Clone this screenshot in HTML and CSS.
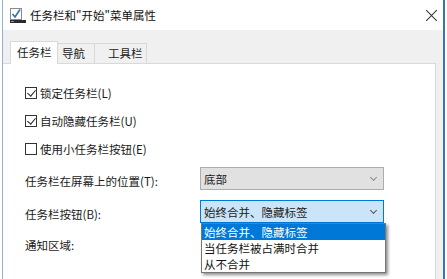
FILE: index.html
```html
<!DOCTYPE html>
<html lang="zh-CN">
<head>
<meta charset="utf-8">
<link rel="stylesheet" href="styles.css">
</head>
<body>
<div class="window">
  <div class="titlebar">
    <svg class="app-icon" width="16" height="16" viewBox="0 0 16 16">
      <rect x="0.5" y="0.5" width="11" height="11" fill="#fff" stroke="#8a8a8a"/>
      <path d="M2.5 6 L5 9 L10 1.5" fill="none" stroke="#2a6ebd" stroke-width="1.6"/>
      <rect x="0" y="12" width="16" height="3" fill="#2b2b2b"/>
      <rect x="1" y="13" width="3" height="1" fill="#6fa0d8"/>
    </svg>
    <span class="title">任务栏和"开始"菜单属性</span>
    <span class="close"></span>
  </div>
  <div class="body">
    <div class="tabs">
      <div class="tab active">任务栏</div>
      <div class="tab t2">导航</div>
      <div class="tab t3">工具栏</div>
    </div>
    <div class="panel">
      <div class="check-row"><span class="box checked"></span><span>锁定任务栏(L)</span></div>
      <div class="check-row"><span class="box checked"></span><span>自动隐藏任务栏(U)</span></div>
      <div class="check-row"><span class="box"></span><span>使用小任务栏按钮(E)</span></div>
      <div class="field-row first">
        <span class="label">任务栏在屏幕上的位置(T):</span>
        <div class="select grey"><span>底部</span><span class="chev light"></span></div>
      </div>
      <div class="field-row">
        <span class="label">任务栏按钮(B):</span>
        <div class="select open">
          <span>始终合并、隐藏标签</span><span class="chev"></span>
          <div class="dropdown">
            <div class="item sel">始终合并、隐藏标签</div>
            <div class="item">当任务栏被占满时合并</div>
            <div class="item">从不合并</div>
          </div>
        </div>
      </div>
      <div class="plain-row">通知区域:</div>
    </div>
  </div>
</div>
</body>
</html>
```

FILE: styles.css
```css
* { box-sizing: border-box; }
html, body {
  margin: 0;
  padding: 0;
  width: 447px;
  height: 279px;
  overflow: hidden;
  background: #ffffff;
  font-family: "Noto Sans CJK SC", "Noto Sans", sans-serif;
  font-size: 11.5px;
  color: #1a1a1a;
}
.window {
  margin-left: 2px;
  width: 443px;
  height: 279px;
  border-left: 1px solid #8fb3d3;
  border-right: 2px solid #3a76a8;
  display: flex;
  flex-direction: column;
}
.titlebar {
  height: 30px;
  background: #ffffff;
  display: flex;
  align-items: center;
  padding-left: 7px;
  padding-right: 6px;
  flex-shrink: 0;
}
.app-icon { flex-shrink: 0; margin-top: 1px; }
.title {
  margin-left: 4px;
  font-size: 11.5px;
  line-height: 16px;
  color: #111;
  flex: 1;
}
.close {
  width: 11px;
  height: 11px;
  position: relative;
}
.close::before, .close::after {
  content: "";
  position: absolute;
  left: 5px;
  top: -2px;
  width: 1px;
  height: 15px;
  background: #333;
}
.close::before { transform: rotate(45deg); }
.close::after { transform: rotate(-45deg); }

.body {
  flex: 1;
  background: #f0f0f0;
  display: flex;
  flex-direction: column;
  padding-top: 11px;
  padding-right: 7px;
}
.tabs {
  display: flex;
  align-items: flex-end;
  height: 22px;
  padding-left: 7px;
}
.tab {
  height: 20px;
  border: 1px solid #d9d9d9;
  border-bottom: none;
  background: #f0f0f0;
  line-height: 19px;
  margin-left: -1px;
  white-space: nowrap;
}
.tab.active {
  height: 23px;
  margin-bottom: -1px;
  background: #ffffff;
  position: relative;
  z-index: 1;
  margin-left: 0;
  width: 48px;
  padding-left: 6px;
  line-height: 21px;
}
.tab.t2 { width: 38px; padding-left: 4px; }
.tab.t3 { width: 53px; padding-left: 13px; }

.panel {
  flex: 1;
  background: #ffffff;
  border-top: 1px solid #d9d9d9;
  border-right: 1px solid #d9d9d9;
  padding: 21px 0 0 22px;
  display: flex;
  flex-direction: column;
}
.check-row {
  height: 16px;
  display: flex;
  align-items: center;
  gap: 3px;
  line-height: 16px;
  margin-bottom: 12px;
}
.check-row:nth-child(3) { margin-bottom: 0; }
.box {
  width: 12px;
  height: 12px;
  border: 1px solid #333;
  background: #fff;
  position: relative;
  flex-shrink: 0;
}
.box.checked::after {
  content: "";
  position: absolute;
  left: 3px;
  top: 0px;
  width: 4px;
  height: 7px;
  border-right: 1px solid #222;
  border-bottom: 1px solid #222;
  transform: rotate(40deg);
}
.field-row {
  display: flex;
  align-items: center;
  height: 23px;
  margin-top: 10px;
}
.label {
  width: 175px;
  padding-top: 4px;
  line-height: 16px;
}
.select {
  width: 184px;
  height: 23px;
  border: 1px solid #adadad;
  background: #e1e1e1;
  display: flex;
  align-items: center;
  justify-content: space-between;
  padding: 0 4px 0 3px;
  line-height: 16px;
  position: relative;
}
.select.open {
  background: #cce4f7;
  border-color: #0078d7;
}
.chev {
  width: 5px;
  height: 5px;
  border-right: 1px solid #555;
  border-bottom: 1px solid #555;
  transform: rotate(45deg);
  margin-top: -3px;
  margin-right: 3px;
}
.chev.light {
  border-color: #8a8a8a;
}
.dropdown {
  position: absolute;
  top: 22px;
  left: 0;
  width: 185px;
  border: 1px solid #767676;
  background: #ffffff;
  box-shadow: 2px 2px 3px rgba(0, 0, 0, 0.45);
  z-index: 5;
  color: #111;
}
.item {
  height: 16px;
  line-height: 16px;
  padding-left: 2px;
  white-space: nowrap;
}
.item.sel {
  background: #0078d7;
  color: #ffffff;
}
.plain-row {
  margin-top: 14px;
  height: 16px;
  line-height: 16px;
}
```
